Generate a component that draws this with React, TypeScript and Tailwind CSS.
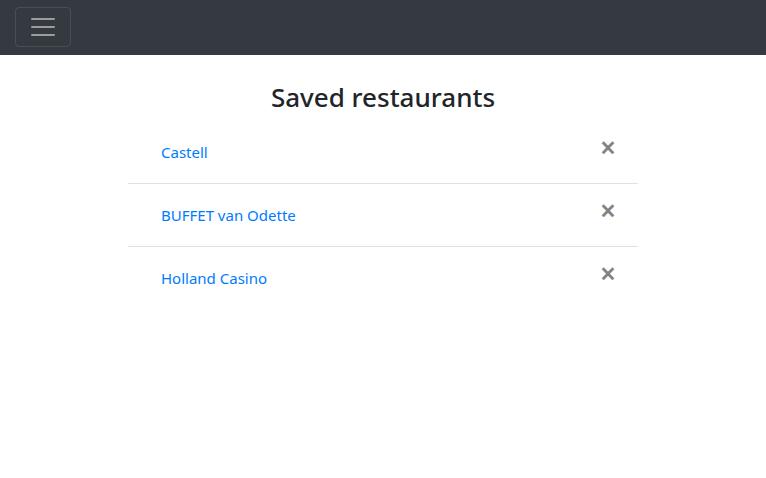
import React from "react"

const restaurants = ["Castell", "BUFFET van Odette", "Holland Casino"]

export default function App() {
  return (
    <div className="min-h-screen bg-white font-['Noto_Sans',sans-serif] text-[#212529]">
      <nav className="flex h-[55px] items-start bg-[#343a40] px-[15px] pt-[7px]">
        <button className="flex h-[40px] w-[56px] items-center justify-center rounded border border-white/10">
          <svg width="30" height="30" viewBox="0 0 30 30">
            <path
              d="M4 7h22M4 15h22M4 23h22"
              stroke="rgba(255,255,255,0.5)"
              strokeWidth="2"
              strokeLinecap="round"
            />
          </svg>
        </button>
      </nav>
      <div className="mx-auto w-[510px]">
        <h2 className="mt-[23px] mb-[5px] text-center text-[26px] font-medium leading-[38px]">
          Saved restaurants
        </h2>
        <ul>
          {restaurants.map((name, i) => (
            <li
              key={name}
              className={`flex h-[63px] items-start justify-between pl-[33px] pr-[22px] ${
                i < restaurants.length - 1 ? "border-b border-[#dee2e6]" : ""
              }`}
            >
              <a href="#" className="pt-[19px] text-[15px] leading-6 text-[#007bff]">
                {name}
              </a>
              <button className="pt-[14px] text-[28px] font-semibold leading-[24px] text-[#828282]">
                ×
              </button>
            </li>
          ))}
        </ul>
      </div>
    </div>
  )
}
